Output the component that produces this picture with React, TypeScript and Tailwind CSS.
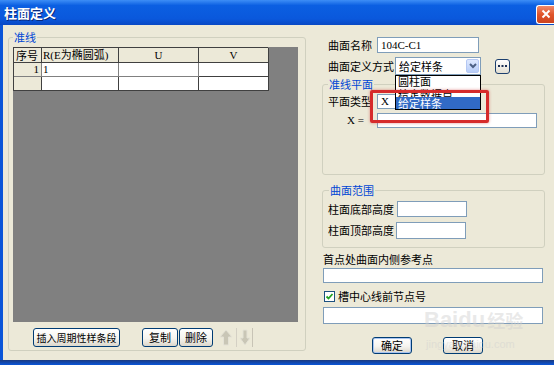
import React from "react";

function XpButton({ className, children }: { className: string; children?: React.ReactNode }) {
  return (
    <div
      className={
        "flex items-center justify-center whitespace-nowrap rounded-[3px] border border-[#003c74] bg-[linear-gradient(to_bottom,#ffffff,#f5f4ef_55%,#dcd7cb)] leading-none text-black " +
        className
      }
    >
      {children}
    </div>
  );
}

function TextBox({ className, children }: { className: string; children?: React.ReactNode }) {
  return (
    <div className={"flex items-center border border-[#7f9db9] bg-white pl-[3px] text-[11px] leading-none " + className}>
      {children}
    </div>
  );
}

function ComboArrow() {
  return (
    <div className="ml-auto mr-[1px] flex h-[14px] w-[13px] items-center justify-center rounded-[2px] border border-[#b5c8f3] bg-[linear-gradient(to_bottom,#dfe9ff,#b7cdf8)]">
      <svg width="8" height="6" viewBox="0 0 8 6">
        <path d="M1 1 L4 4 L7 1" stroke="#4d6185" strokeWidth="2" fill="none" />
      </svg>
    </div>
  );
}

export default function App() {
  return (
    <div className="relative h-[365px] w-[554px] overflow-hidden bg-[#0a55d8] font-['Liberation_Serif','Noto_Sans_CJK_SC',serif] text-[11px] leading-none text-black">
      {/* title bar */}
      <div className="flex h-[25px] items-center bg-[linear-gradient(to_bottom,#3d8ef6,#0b5fe2_22%,#0a58dc_75%,#0848c4)]">
        <span className="ml-[4px] font-['Noto_Sans_CJK_SC',sans-serif] text-[13px] font-bold text-white [text-shadow:1px_1px_0_#0a2a7a]">
          柱面定义
        </span>
        <div className="ml-auto mt-[3px] flex h-[19px] w-[18px] items-center justify-center rounded-l-[3px] border border-r-0 border-white bg-[linear-gradient(to_bottom,#f08a6a,#e0542a_50%,#cc4420)]">
          <svg width="10" height="10" viewBox="0 0 10 10">
            <path d="M1.5 1.5 L8.5 8.5 M8.5 1.5 L1.5 8.5" stroke="white" strokeWidth="2" />
          </svg>
        </div>
      </div>

      {/* body */}
      <div className="ml-[3px] flex h-[335px] bg-[#ece9d8]">
        {/* left group */}
        <fieldset className="ml-[5px] mt-[6px] h-[320px] w-[298px] rounded-[3px] border border-[#d0d0bf] px-[4px]">
          <legend className="px-[1px] font-['Noto_Sans_CJK_SC',sans-serif] text-[11px] leading-[12px] text-[#0046d5]">准线</legend>
          <div className="mt-[4px] h-[275px] w-[285px] bg-[#808080]">
            <div className="grid w-[255px] grid-cols-[28px_77px_80px_70px] grid-rows-[15px_14px_14px] border-l border-t border-[#404040]">
              <div className="flex items-center border-b border-r border-[#404040] bg-[#ece9d8] pl-[2px] font-['Noto_Sans_CJK_SC',sans-serif]">序号</div>
              <div className="flex items-center border-b border-r border-[#404040] bg-[#ece9d8] pl-[1px]">R(E为椭圆弧)</div>
              <div className="flex items-center justify-center border-b border-r border-[#404040] bg-[#ece9d8]">U</div>
              <div className="flex items-center justify-center border-b border-r border-[#404040] bg-[#ece9d8]">V</div>

              <div className="flex items-center justify-end border-b border-r border-[#808080] bg-[#ece9d8] pr-[2px]">1</div>
              <div className="flex items-center border-b border-r border-[#808080] bg-white pl-[1px]">1</div>
              <div className="border-b border-r border-[#808080] bg-white"></div>
              <div className="border-b border-r border-[#404040] bg-white"></div>

              <div className="border-b border-r border-[#404040] bg-[#ece9d8]"></div>
              <div className="border-b border-r border-[#404040] bg-white"></div>
              <div className="border-b border-r border-[#404040] bg-white"></div>
              <div className="border-b border-r border-[#404040] bg-white"></div>
            </div>
          </div>
          <div className="mt-[6px] flex h-[19px] items-stretch font-['Noto_Sans_CJK_SC',sans-serif]">
            <XpButton className="ml-[20px] w-[87px] text-[10px]">插入周期性样条段</XpButton>
            <XpButton className="ml-[22px] w-[36px] text-[11px]">复制</XpButton>
            <XpButton className="ml-[1px] w-[34px] text-[11px]">删除</XpButton>
            <div className="ml-[2px] flex w-[22px] items-center justify-center border-r border-[#d4d0c4]">
              <svg width="14" height="17" viewBox="0 0 14 17">
                <path d="M7 1 L13 8 L9.5 8 L9.5 16 L4.5 16 L4.5 8 L1 8 Z" fill="#c9c6b6" stroke="#e4e2d6" strokeWidth="1" />
              </svg>
            </div>
            <div className="flex w-[16px] items-center justify-center border-r border-[#c8c4b6]">
              <svg width="12" height="17" viewBox="0 0 12 17">
                <path d="M6 16 L11 9 L8 9 L8 1 L4 1 L4 9 L1 9 Z" fill="#c9c6b6" stroke="#e4e2d6" strokeWidth="1" />
              </svg>
            </div>
          </div>
        </fieldset>

        {/* right column */}
        <div className="ml-[16px] flex w-[223px] flex-col font-['Liberation_Serif','Noto_Sans_CJK_SC',serif]">
          <div className="mt-[12px] flex h-[16px] items-center">
            <span className="w-[55px] pl-[6px] font-['Noto_Sans_CJK_SC',sans-serif]">曲面名称</span>
            <TextBox className="h-[16px] w-[102px]">104C-C1</TextBox>
          </div>
          <div className="mt-[4px] flex h-[18px] items-center">
            <span className="w-[73px] pl-[6px] font-['Noto_Sans_CJK_SC',sans-serif]">曲面定义方式</span>
            <div className="flex h-[18px] w-[86px] items-center border border-[#7f9db9] bg-white pl-[3px] font-['Noto_Sans_CJK_SC',sans-serif]">
              给定样条
              <ComboArrow />
            </div>
            <div className="ml-[14px] flex h-[15px] w-[15px] items-center justify-center rounded-[3px] border border-[#1c3f6e] bg-[linear-gradient(to_bottom,#ffffff,#e2ded2)]">
              <svg width="9" height="3" viewBox="0 0 9 3">
                <rect x="0" y="0" width="2" height="2" fill="#1b2f55" />
                <rect x="3.5" y="0" width="2" height="2" fill="#1b2f55" />
                <rect x="7" y="0" width="2" height="2" fill="#1b2f55" />
              </svg>
            </div>
          </div>

          <fieldset className="mt-[3px] h-[97px] w-[223px] rounded-[3px] border border-[#d0d0bf] px-[5px]">
            <legend className="px-[1px] font-['Noto_Sans_CJK_SC',sans-serif] text-[11px] leading-[12px] text-[#0046d5]">准线平面</legend>
            <div className="mt-[4px] flex h-[15px] items-center">
              <span className="w-[49px] font-['Noto_Sans_CJK_SC',sans-serif]">平面类型</span>
              <div className="flex h-[15px] w-[100px] items-center border border-[#7f9db9] bg-white pl-[3px]">X</div>
            </div>
            <div className="mt-[4px] flex h-[15px] items-center">
              <span className="w-[49px] pl-[19px]">X =</span>
              <TextBox className="h-[15px] w-[160px]"></TextBox>
            </div>
          </fieldset>

          <fieldset className="mt-[9px] h-[64px] w-[223px] rounded-[3px] border border-[#d0d0bf] px-[5px] font-['Noto_Sans_CJK_SC',sans-serif]">
            <legend className="ml-[1px] px-[1px] text-[11px] leading-[12px] text-[#0046d5]">曲面范围</legend>
            <div className="mt-[5px] flex h-[16px] items-center">
              <span className="w-[69px]">柱面底部高度</span>
              <TextBox className="h-[16px] w-[70px]"></TextBox>
            </div>
            <div className="mt-[5px] flex h-[17px] items-center">
              <span className="w-[68px]">柱面顶部高度</span>
              <TextBox className="h-[17px] w-[70px]"></TextBox>
            </div>
          </fieldset>

          <div className="mt-[5px] h-[12px] pl-[1px] font-['Noto_Sans_CJK_SC',sans-serif] leading-[12px]">首点处曲面内侧参考点</div>
          <TextBox className="ml-[1px] mt-[3px] h-[15px] w-[220px]"></TextBox>
          <div className="mt-[8px] flex h-[11px] items-center font-['Noto_Sans_CJK_SC',sans-serif]">
            <div className="ml-[2px] flex h-[11px] w-[11px] items-center justify-center border border-[#1c5180] bg-white">
              <svg width="9" height="9" viewBox="0 0 9 9">
                <path d="M1.5 4.5 L3.5 6.5 L7.5 2" stroke="#21a121" strokeWidth="1.8" fill="none" />
              </svg>
            </div>
            <span className="ml-[3px]">槽中心线前节点号</span>
          </div>
          <TextBox className="ml-[1px] mt-[5px] h-[17px] w-[220px]"></TextBox>
          <div className="mt-[13px] flex h-[17px] font-['Noto_Sans_CJK_SC',sans-serif]">
            <XpButton className="ml-[50px] w-[40px] text-[11px] shadow-[inset_0_0_0_1px_#a9c4f0]">确定</XpButton>
            <XpButton className="ml-[31px] w-[40px] text-[11px]">取消</XpButton>
          </div>
        </div>
      </div>

      {/* bottom frame */}
      <div className="h-[5px] bg-[linear-gradient(to_bottom,#1b3a80,#0a55d8)]"></div>

      {/* dropdown list overlay */}
      <div className="absolute left-[395px] top-[75px] h-[35px] w-[86px] overflow-hidden border border-black bg-white font-['Noto_Sans_CJK_SC',sans-serif] text-[11px]">
        <div className="h-[11px] pl-[2px] leading-[11px]">圆柱面</div>
        <div className="h-[10px] overflow-hidden pl-[2px] leading-[14px]">给定数据点</div>
        <div className="h-[12px] bg-[#316ac5] pl-[2px] leading-[12px] text-white">给定样条</div>
      </div>

      {/* red highlight */}
      <div className="absolute left-[370px] top-[90px] h-[33px] w-[119px] rounded-[2px] border-[3px] border-[#d62b2b] shadow-[0_0_3px_rgba(200,30,30,0.5)]"></div>

      {/* watermark */}
      <div className="pointer-events-none absolute left-[424px] top-[309px] flex items-center font-['Liberation_Sans',sans-serif] text-[22px] font-bold text-[#d0d0d0] opacity-45">
        <span>Bai</span>
        <span>du</span>
        <span className="ml-[2px] font-['Noto_Sans_CJK_SC',sans-serif] text-[18px]">经验</span>
      </div>
      <div className="pointer-events-none absolute left-[426px] top-[339px] font-['Liberation_Sans',sans-serif] text-[11px] text-[#d0d0d0] opacity-45">
        jingyan.baidu.com
      </div>
    </div>
  );
}
